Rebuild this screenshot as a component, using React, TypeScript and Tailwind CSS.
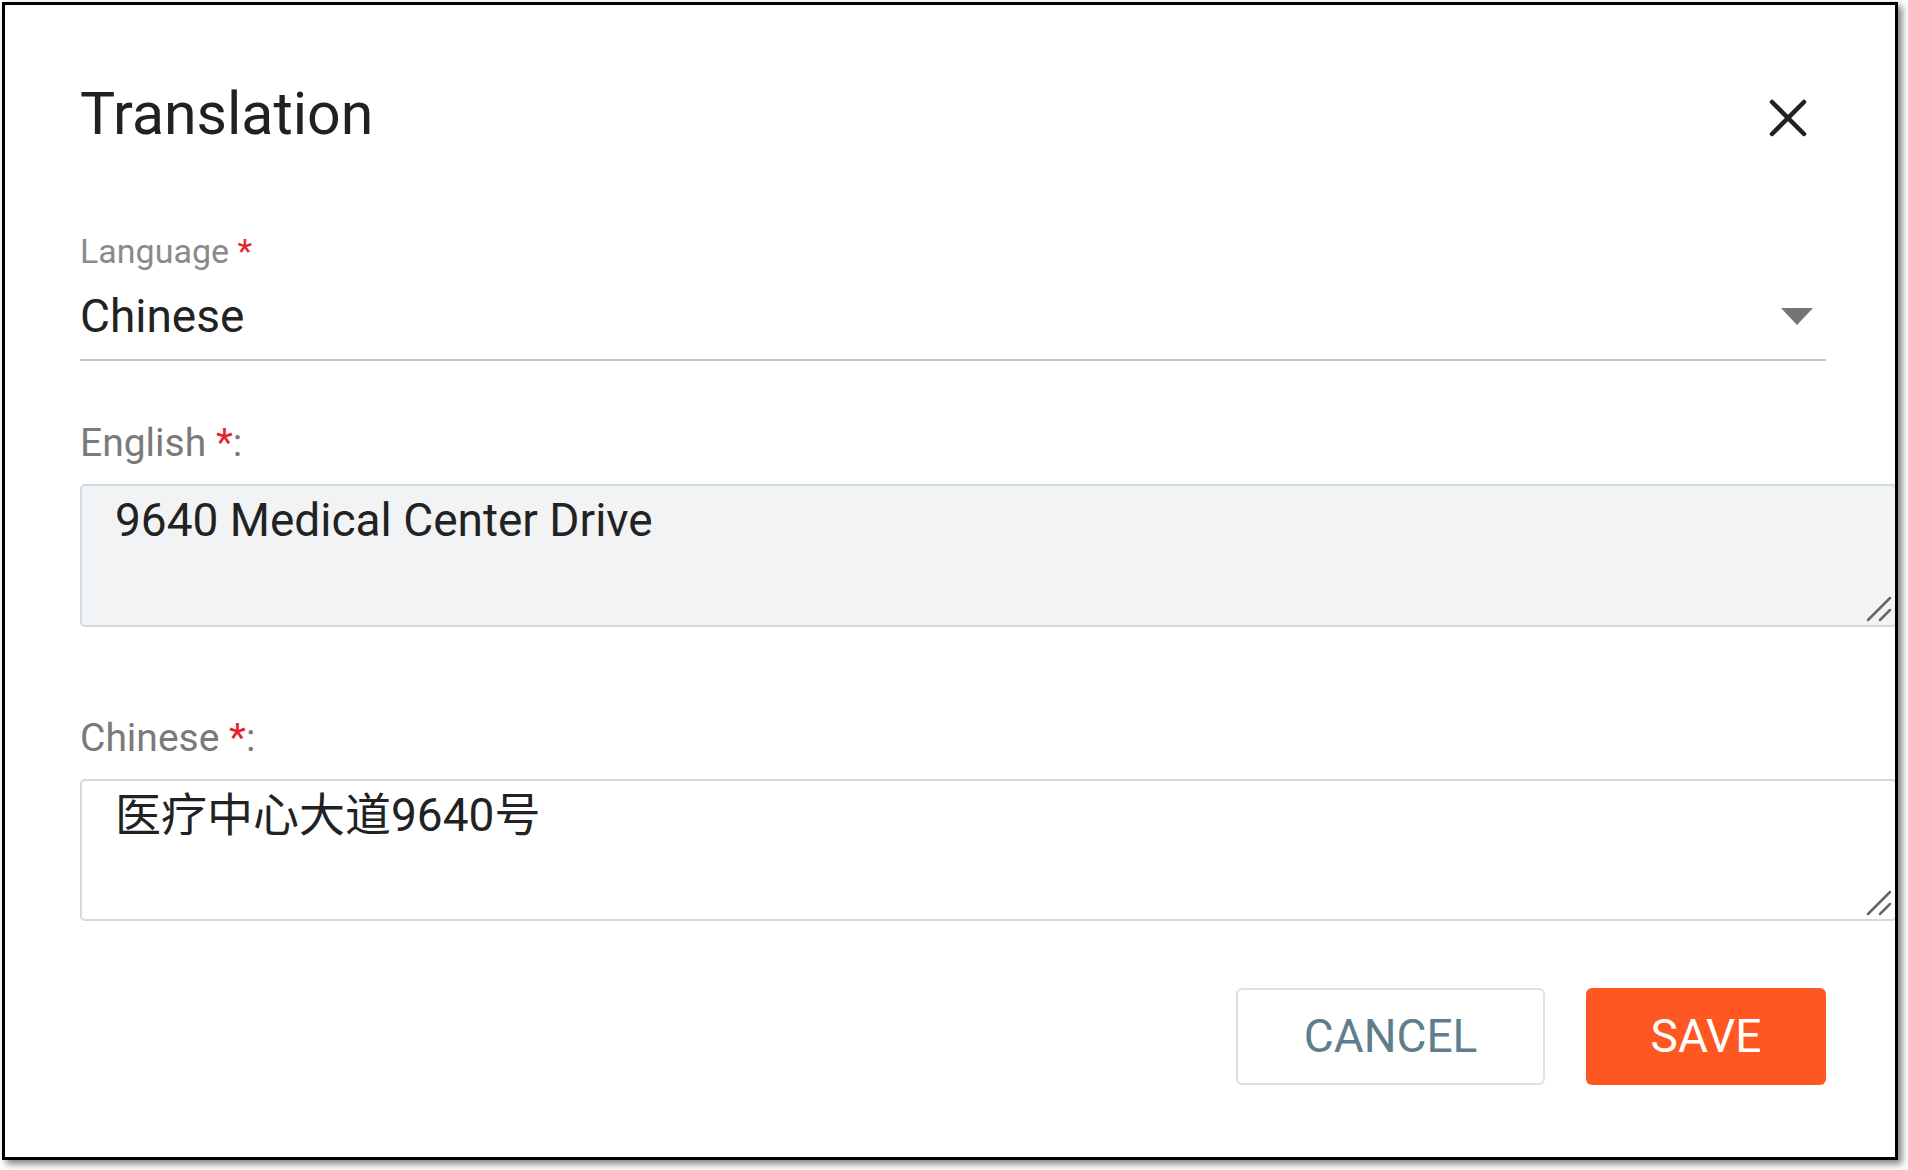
import React from "react";

const CloseIcon = () => (
  <svg width="38" height="38" viewBox="0 0 38 38" fill="none">
    <path d="M3 3 L35 35 M35 3 L3 35" stroke="#222" strokeWidth="4.5" strokeLinecap="round" />
  </svg>
);

const ResizeHandle = () => (
  <svg width="26" height="26" viewBox="0 0 26 26" className="absolute right-[3px] bottom-[3px]" fill="none">
    <path d="M2 24 L24 2 M14 24 L24 14" stroke="#666" strokeWidth="2.5" strokeLinecap="round" />
  </svg>
);

const FieldLabel = ({ text }: { text: string }) => (
  <p className="text-[39px] leading-[46px] text-[#7a7a7a]">
    {text} <span className="text-[#e3262a]">*</span>:
  </p>
);

const TextBox = ({ value, shaded }: { value: string; shaded?: boolean }) => (
  <div
    className={
      shaded
        ? "relative mt-[18px] h-[143px] w-[1817px] rounded-[5px] border-2 border-[#d2dce0] bg-[#f2f3f5] pl-[33px] pt-[6px]"
        : "relative mt-[18px] h-[142px] w-[1817px] rounded-[5px] border-2 border-[#d2dce0] bg-white pl-[33px] pt-[6px]"
    }
  >
    <p className="text-[46px] leading-[56px] text-[#222]">{value}</p>
    <ResizeHandle />
  </div>
);

export default function App() {
  return (
    <div className="min-h-screen bg-white p-[2px] font-[Roboto,'Noto_Sans_CJK_SC',sans-serif]">
      <div className="h-[1158px] w-[1896px] overflow-hidden border-[3px] border-black bg-white shadow-[4px_4px_7px_rgba(0,0,0,0.5)]">
        <div className="w-[1746px] pl-[75px] pt-[79px] box-content">
          {/* header */}
          <div className="flex items-start justify-between">
            <h1 className="text-[59px] leading-[60px] text-[#212121]">Translation</h1>
            <div className="mr-[19px] mt-[15px]">
              <CloseIcon />
            </div>
          </div>

          {/* language select */}
          <div className="mt-[87px]">
            <p className="text-[34px] leading-[40px] text-[#8a8a8a]">
              Language <span className="text-[#e3262a]">*</span>
            </p>
            <div className="mt-[17px] flex items-center justify-between border-b-2 border-[#c6c6c6] pb-[15px]">
              <span className="text-[46px] leading-[56px] text-[#222]">Chinese</span>
              <svg width="32" height="17" viewBox="0 0 32 17" className="mr-[13px]">
                <polygon points="0,0 32,0 16,17" fill="#757575" />
              </svg>
            </div>
          </div>

          {/* english */}
          <div className="mt-[59px]">
            <FieldLabel text="English" />
            <TextBox value="9640 Medical Center Drive" shaded />
          </div>

          {/* chinese */}
          <div className="mt-[88px]">
            <FieldLabel text="Chinese" />
            <TextBox value="医疗中心大道9640号" />
          </div>

          {/* actions */}
          <div className="mt-[67px] flex justify-end gap-[41px]">
            <button className="h-[97px] w-[309px] rounded-[6px] border-2 border-[#e0e0e0] bg-white text-[46px] text-[#607d8b]">
              CANCEL
            </button>
            <button className="h-[97px] w-[240px] rounded-[6px] bg-[#ff5722] text-[46px] text-white">
              SAVE
            </button>
          </div>
        </div>
      </div>
    </div>
  );
}
